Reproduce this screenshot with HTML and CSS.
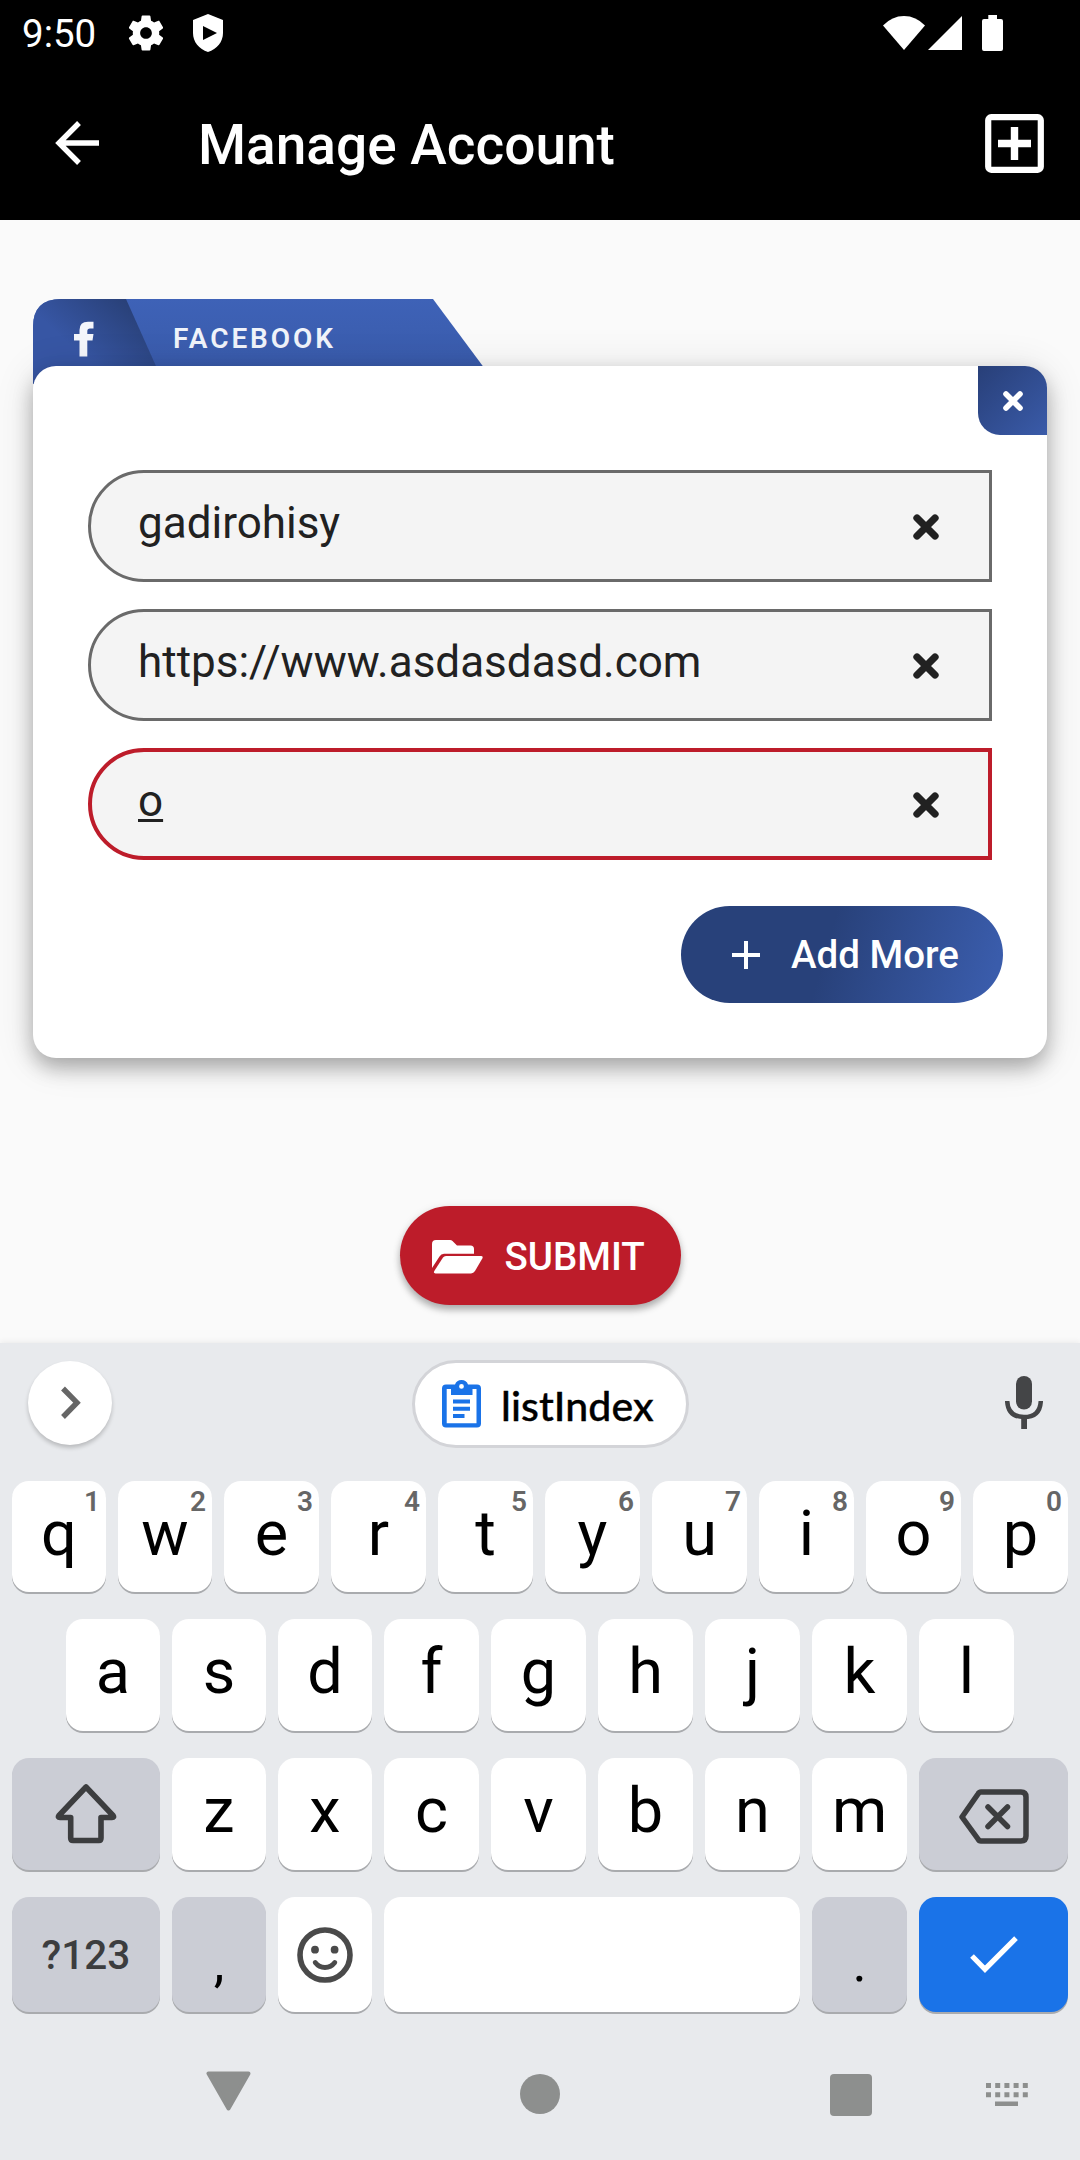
FILE: index.html
```html
<!DOCTYPE html>
<html lang="en">
<head>
<meta charset="utf-8">
<title>Manage Account</title>
<link rel="stylesheet" href="styles.css">
</head>
<body>
<div class="screen">
  <header class="top">
    <div class="status">
      <span class="clock">9:50</span>
      <svg class="gear" width="44" height="44" viewBox="0 0 24 24"><path fill="#fff" d="M19.14 12.94c.04-.3.06-.61.06-.94 0-.32-.02-.64-.07-.94l2.03-1.58c.18-.14.23-.41.12-.61l-1.92-3.32c-.12-.22-.37-.29-.59-.22l-2.39.96c-.5-.38-1.03-.7-1.62-.94l-.36-2.54c-.04-.24-.24-.41-.48-.41h-3.84c-.24 0-.43.17-.47.41l-.36 2.54c-.59.24-1.13.57-1.62.94l-2.39-.96c-.22-.08-.47 0-.59.22L2.74 8.87c-.12.21-.08.47.12.61l2.03 1.58c-.05.3-.09.63-.09.94s.02.64.07.94l-2.03 1.58c-.18.14-.23.41-.12.61l1.92 3.32c.12.22.37.29.59.22l2.39-.96c.5.38 1.03.7 1.62.94l.36 2.54c.05.24.24.41.48.41h3.84c.24 0 .44-.17.47-.41l.36-2.54c.59-.24 1.13-.56 1.62-.94l2.39.96c.22.08.47 0 .59-.22l1.92-3.32c.12-.22.07-.47-.12-.61l-2.01-1.58zM12 15.2c-1.76 0-3.200-1.440-3.200-3.200s1.440-3.200 3.200-3.200 3.200 1.440 3.200 3.200-1.440 3.200-3.200 3.200z"/></svg>
      <svg class="shield" width="32" height="38" viewBox="0 0 32 38"><path fill="#fff" fill-rule="evenodd" d="M16 0 31 6V19C31 28 25 35 16 38 7 35 1 28 1 19V6ZM11 12V26L25 19Z"/></svg>
      <svg class="wifi" width="42" height="34" viewBox="0 0 42 34"><path fill="#fff" d="M0 9.5Q9 0 21 0T42 9.5L21 34Z"/></svg>
      <svg class="signal" width="34" height="34" viewBox="0 0 34 34"><path fill="#fff" d="M34 0V34H0Z"/></svg>
      <svg class="battery" width="21" height="36" viewBox="0 0 21 36"><path fill="#fff" d="M6.3 0H15V4H19Q21 4 21 6V34Q21 36 19 36H2Q0 36 0 34V6Q0 4 2 4H6.3Z"/></svg>
    </div>
    <div class="appbar">
      <svg class="back" width="44" height="44" viewBox="0 0 44 44"><path fill="none" stroke="#fff" stroke-width="5.4" d="M24 2 4 22 24 42M4 22H44"/></svg>
      <h1>Manage Account</h1>
      <svg class="addbox" width="59" height="59" viewBox="0 0 59 59"><rect x="3.2" y="3.2" width="52.6" height="52.6" rx="3" fill="none" stroke="#fff" stroke-width="6.2"/><path fill="none" stroke="#fff" stroke-width="7.4" stroke-linejoin="round" d="M29.5 13V46M13 29.5H46"/></svg>
    </div>
  </header>

  <main>
    <div class="tab">
      <svg class="tab-shape" width="451" height="85" viewBox="0 0 451 85">
        <defs>
          <linearGradient id="tabBlue" x1="0" y1="0" x2="0" y2="1"><stop offset="0" stop-color="#3e62b7"/><stop offset="1" stop-color="#3859a8"/></linearGradient>
          <linearGradient id="tabDark" gradientUnits="userSpaceOnUse" x1="104" y1="4" x2="52" y2="60"><stop offset="0" stop-color="#283f75"/><stop offset="1" stop-color="#3756a4"/></linearGradient>
        </defs>
        <path fill="url(#tabBlue)" d="M28 0H400L450.500 68V85H0V28Q0 0 28 0Z"/>
        <path fill="url(#tabDark)" d="M28 0H93L131 85H0V28Q0 0 28 0Z"/>
        <path fill="#f4f6fb" d="M46.500 57.500V41.500H41V35H46.500V31Q46.500 22.800 55 22.800H60.500V29.500H57Q54.300 29.500 54.300 32V35H60.500L59.500 41.500H54.300V57.500Z"/>
      </svg>
      <span class="tab-label">FACEBOOK</span>
    </div>
    <section class="card">
      <button class="close" aria-label="Close"><svg width="20" height="20" viewBox="0 0 20 20"><path fill="none" stroke="#fff" stroke-width="5.600" stroke-linecap="round" d="M3 3 17 17M17 3 3 17"/></svg></button>
      <div class="fields">
        <div class="field"><span>gadirohisy</span><svg width="26" height="26" viewBox="0 0 26 26"><path d="M4 4 22 22M22 4 4 22"/></svg></div>
        <div class="field"><span>https://www.asdasdasd.com</span><svg width="26" height="26" viewBox="0 0 26 26"><path d="M4 4 22 22M22 4 4 22"/></svg></div>
        <div class="field active"><span class="composing">o</span><svg width="26" height="26" viewBox="0 0 26 26"><path d="M4 4 22 22M22 4 4 22"/></svg></div>
      </div>
      <button class="more"><svg width="28" height="28" viewBox="0 0 28 28"><path fill="none" stroke="#fff" stroke-width="4" d="M14 0V28M0 14H28"/></svg><span>Add More</span></button>
    </section>
    <button class="submit"><svg width="51" height="34" viewBox="0 0 51 34"><path fill="#fff" d="M0 28V4Q0 0 4 0H18Q19.500 0 20.500 1L25 5.500H38.500Q42 5.500 42 9V13.700H12Q9 13.700 7.500 16.500Z"/><path fill="#fff" d="M11 17.500Q12 16 14 16H49Q51.500 16 50.300 18.500L43 31Q41.500 33.400 39 33.400H3.500Q1 33.400 2.300 31Z"/></svg><span>SUBMIT</span></button>
  </main>

  <div class="keyboard">
    <div class="suggest">
      <div class="round"><svg width="20" height="34" viewBox="0 0 20 34"><path fill="none" stroke="#666" stroke-width="5.400" d="M2 2.500 16 16.700 2 31"/></svg></div>
      <div class="chip">
        <svg width="39" height="48" viewBox="0 0 39 48"><path fill="#1a73e8" fill-rule="evenodd" d="M4 4.500H13Q14.500 0 19.500 0T26 4.500H35Q39 4.500 39 8.500V43.500Q39 47.500 35 47.500H4Q0 47.500 0 43.500V8.500Q0 4.500 4 4.500ZM4.700 9V43.200H34.500V9H30.500V15H9V9ZM19.500 4A2.400 2.400 0 1 0 19.500 8.800 2.400 2.400 0 1 0 19.500 4Z"/><path fill="#1a73e8" d="M11 19.500H28V23.500H11ZM11 26.700H28V30.700H11ZM11 34H22.500V38H11Z"/></svg>
        <span>listIndex</span>
      </div>
      <svg class="mic" width="38" height="54" viewBox="0 0 38 54"><rect x="11" y="0" width="16" height="33.500" rx="8" fill="#444547"/><path fill="none" stroke="#444547" stroke-width="4.500" d="M2.200 25Q3 41 19 41T35.800 25"/><path fill="#444547" d="M16.200 41H22V53H16.200Z"/></svg>
    </div>
    <div class="row">
      <div class="key">q<sup>1</sup></div><div class="key">w<sup>2</sup></div><div class="key">e<sup>3</sup></div><div class="key">r<sup>4</sup></div><div class="key">t<sup>5</sup></div><div class="key">y<sup>6</sup></div><div class="key">u<sup>7</sup></div><div class="key">i<sup>8</sup></div><div class="key">o<sup>9</sup></div><div class="key">p<sup>0</sup></div>
    </div>
    <div class="row inset">
      <div class="key">a</div><div class="key">s</div><div class="key">d</div><div class="key">f</div><div class="key">g</div><div class="key">h</div><div class="key">j</div><div class="key">k</div><div class="key">l</div>
    </div>
    <div class="row mixed">
      <div class="key fn shift"><svg width="62" height="62" viewBox="0 0 62 62"><path fill="none" stroke="#3c3d3f" stroke-width="5.600" stroke-linejoin="round" d="M31 4 4 32.500Q2.500 34.500 5 34.500H15.700V55Q15.700 57.500 18 57.500H44Q46 57.500 46 55V34.500H57Q59.500 34.500 58 32.500Z"/></svg></div>
      <div class="key">z</div><div class="key">x</div><div class="key">c</div><div class="key">v</div><div class="key">b</div><div class="key">n</div><div class="key">m</div>
      <div class="key fn del"><svg width="70" height="56" viewBox="0 0 70 56"><path fill="none" stroke="#3c3d3f" stroke-width="5.500" stroke-linejoin="round" d="M22 3H62Q67 3 67 8V47Q67 52 62 52H22Q20 52 19 50L3 28 19 5Q20 3 22 3Z"/><path fill="none" stroke="#3c3d3f" stroke-width="5.500" stroke-linecap="round" d="M29 18 48.500 37.500M48.500 18 29 37.500"/></svg></div>
    </div>
    <div class="row bottom">
      <div class="key fn sym">?123</div>
      <div class="key fn punct">,</div>
      <div class="key emoji"><svg width="56" height="56" viewBox="0 0 56 56"><circle cx="28" cy="28" r="25" fill="none" stroke="#4a4a4a" stroke-width="5.600"/><circle cx="18" cy="22.700" r="3.900" fill="#4a4a4a"/><circle cx="37.600" cy="22.700" r="3.900" fill="#4a4a4a"/><path fill="none" stroke="#4a4a4a" stroke-width="4.800" stroke-linecap="round" d="M18.200 35.500Q22 40.500 28 40.500T37.800 35.500"/></svg></div>
      <div class="key"></div>
      <div class="key fn punct">.</div>
      <div class="key enter"><svg width="48" height="38" viewBox="0 0 48 38"><path fill="none" stroke="#fff" stroke-width="5.200" d="M2 20 15 33.200 46 2.200"/></svg></div>
    </div>
    <nav class="nav">
      <svg class="n-back" width="45" height="40" viewBox="0 0 45 40"><path fill="#8d8f8e" stroke="#8d8f8e" stroke-width="4" stroke-linejoin="round" d="M2.500 2.500H42.500L22.500 37.500Z"/></svg>
      <span class="n-home"></span>
      <span class="n-recent"></span>
      <svg class="n-kb" width="42" height="24" viewBox="0 0 42 24"><path stroke="#8d8f8e" stroke-width="5" stroke-dasharray="5 4.200" d="M0 2.500H42M0 11.800H42"/><path fill="#8d8f8e" d="M9 18.500H32V23H9Z"/></svg>
    </nav>
  </div>
</div>
</body>
</html>
```
FILE: styles.css
```css
* { box-sizing: border-box; }
body { margin: 0; font-family: Roboto, sans-serif; background: #fafafa; }
button { border: 0; padding: 0; font: inherit; color: #fff; }
svg { display: block; flex: none; }
.screen { width: 1080px; height: 2160px; display: flex; flex-direction: column; overflow: hidden; }

.top { height: 220px; background: #000; color: #fff; flex: none; }
.status { height: 66px; display: flex; align-items: center; padding: 0 77px 0 22px; }
.clock { font-size: 38.5px; line-height: 66px; width: 102px; padding-top: 2px; }
.shield { margin-left: 24px; }
.wifi { margin-left: auto; }
.signal { margin-left: 3px; }
.battery { margin-left: 20px; }
.appbar { height: 154px; display: flex; align-items: center; padding: 0 36.5px 0 55px; }
.appbar h1 { margin: 3px 0 0 99px; font-size: 55px; font-weight: 500; line-height: 70px; flex: 1; }

main { height: 1123px; flex: none; padding: 78.5px 33px 0; display: flex; flex-direction: column; align-items: stretch; }
.tab { height: 67px; display: grid; flex: none; }
.tab-shape, .tab-label { grid-area: 1 / 1; }
.tab-label { padding-left: 140px; font-size: 28px; font-weight: 600; letter-spacing: 2.900px; line-height: 80px; color: #f0f3fa; }
.card { height: 692px; flex: none; position: relative; background: #fff; border-radius: 23px; padding: 104.5px 55px 0; display: flex; flex-direction: column;
  box-shadow: 0 10px 20px rgba(0,0,0,.28), 0 4px 40px rgba(0,0,0,.12); }
.close { position: absolute; top: 0; right: 0; width: 69px; height: 69px; border-radius: 0 22px 0 22px; display: flex; align-items: center; justify-content: center; padding-top: 1px; background: linear-gradient(135deg, #283f78, #3a5ba9); }
.fields { display: flex; flex-direction: column; gap: 27px; }
.field { height: 112px; border: 3px solid #6a6a6a; border-radius: 56px 0 0 56px; background: #f4f4f4; display: flex; align-items: center; justify-content: space-between; padding: 0 50px 0 47px; font-size: 44px; color: #212121; }
.field span { margin-top: -6px; }
.field svg { margin-top: 1px; }
.field path { fill: none; stroke: #212121; stroke-width: 7.3px; stroke-linecap: round; }
.field.active { border: 4px solid #bd1c2a; padding: 0 49px 0 46px; }
.field .composing { text-decoration: underline; text-decoration-thickness: 2.5px; text-underline-offset: 3px; }
.more { margin: 46px -11px 0 auto; width: 322px; height: 97px; border-radius: 49px; background: linear-gradient(106deg, #28417a 45%, #3a5cab 95%); display: flex; align-items: center; padding-left: 51px; gap: 31px; font-size: 38.5px; font-weight: 500; }
.submit { margin: 148.5px auto 0; width: 281px; height: 99px; flex: none; border-radius: 50px; background: #bd1c2a; display: flex; align-items: center; padding: 2px 0 0 32px; gap: 22px; font-size: 38.5px; font-weight: 500; box-shadow: 0 5px 7px rgba(0,0,0,.28), 0 1px 10px rgba(0,0,0,.08); }

.keyboard { flex: 1; background: #e8eaed; padding: 17px 12px 0; box-shadow: 0 -1px 6px rgba(0,0,0,.07); }
.suggest { height: 121px; display: flex; align-items: flex-start; padding: 0 25px 0 16px; }
.round { margin-top: 1px; width: 84px; height: 84px; border-radius: 50%; background: #fff; box-shadow: 0 3px 4px rgba(0,0,0,.2); display: flex; align-items: center; justify-content: center; padding-left: 2px; }
.chip { margin-left: 300px; width: 277px; height: 88px; border: 3px solid #d3d4d8; border-radius: 44px; background: #fff; display: flex; align-items: center; padding-left: 27px; gap: 20px; font: 500 41px Lato, sans-serif; color: #000; }
.chip span { padding-top: 2px; letter-spacing: .1px; -webkit-text-stroke: .4px #000; }
.mic { margin: 16px 0 0 auto; }
.row { height: 111px; display: grid; grid-template-columns: 94px 94px repeat(8, 95px); gap: 12px; margin-bottom: 27px; }
.row.inset { grid-template-columns: repeat(3, 94px) repeat(6, 95px); padding: 0 54px; height: 112px; }
.row.mixed { grid-template-columns: 148px 94px 94px repeat(5, 95px) 149px; height: 112px; }
.row.bottom { grid-template-columns: 148px 94px 94px 1fr 95px 149px; height: 115px; margin: 0; }
.key { position: relative; background: #fff; border-radius: 17px; box-shadow: 0 2px 0 #a9abae; display: flex; align-items: center; justify-content: center; padding-bottom: 6px; font-size: 63px; line-height: 1; color: #000; }
.inset .key, .mixed .key { padding-bottom: 8px; }
.key sup { position: absolute; top: 7px; right: 6px; font-size: 28px; line-height: 28px; font-weight: 600; color: #666; }
.fn { background: #cbcdd5; }
.mixed .shift { padding-bottom: 0; }
.mixed .del { padding: 6px 0 0; }
.emoji, .enter { padding-bottom: 0; }
.row .sym { font-size: 40.5px; font-weight: 500; color: #3c3d3f; padding: 2px 0 0; }
.punct { font-size: 54px; padding: 17px 0 0; }
.enter { background: #1a73e8; }
.nav { height: 145px; display: flex; align-items: flex-start; padding: 59px 40px 0 194px; }
.n-home { width: 40px; height: 40px; border-radius: 50%; background: #8d8f8e; margin: 3px 0 0 269px; }
.n-recent { width: 41.5px; height: 41.5px; border-radius: 4px; background: #8d8f8e; margin: 3px 0 0 270px; }
.n-kb { margin: 12px 0 0 auto; }
```
